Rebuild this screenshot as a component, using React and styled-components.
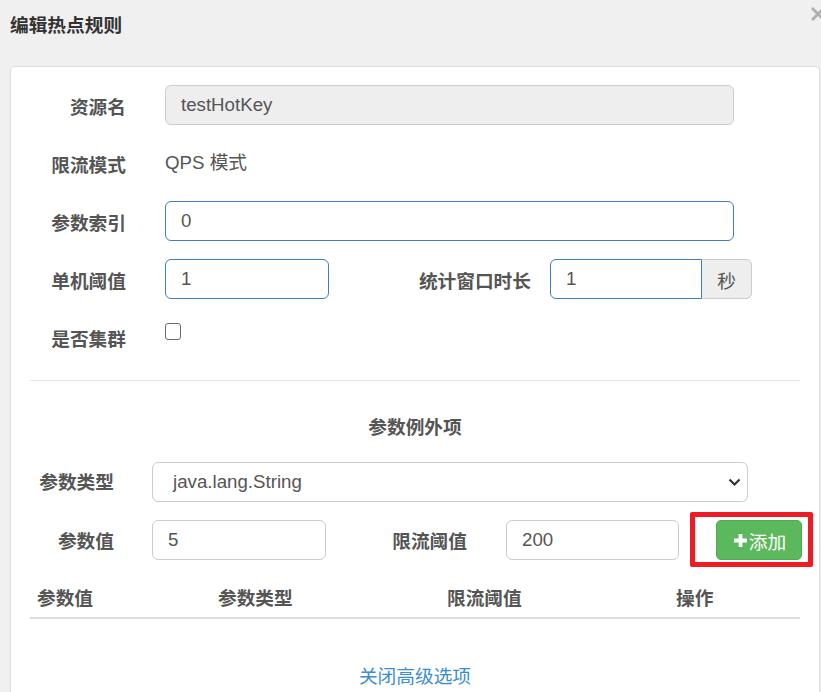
import React from "react";
import styled, { createGlobalStyle } from "styled-components";

const Global = createGlobalStyle`
  html, body { margin: 0; padding: 0; background: #f0f0f0; overflow: hidden; }
  body {
    font-family: "Liberation Sans", "Noto Sans CJK SC", sans-serif;
    font-size: 18.7px;
    color: #555;
  }
  * { box-sizing: border-box; }
`;

const Page = styled.div`
  width: 821px;
  height: 692px;
  overflow: hidden;
  background: #f0f0f0;
`;

const Header = styled.div`
  height: 52px;
  display: flex;
  align-items: center;
  justify-content: space-between;
  padding-left: 10px;
`;

const Title = styled.h4`
  margin: 0;
  font-size: 18.7px;
  line-height: 26px;
  font-weight: 700;
  color: #333;
`;

const CloseButton = styled.span`
  align-self: flex-start;
  display: block;
  margin-top: 7px;
  margin-right: -4px;
  line-height: 0;
`;

const Card = styled.div`
  margin: 14px 1px 0 10px;
  background: #fff;
  border: 1px solid #ddd;
  border-radius: 4px;
  padding: 18px 19px 60px;
`;

const Stack = styled.div`
  display: flex;
  flex-direction: column;
  gap: 18px;
  margin-top: ${(p) => p.$mt || 0}px;
`;

const Row = styled.div`
  display: flex;
  align-items: ${(p) => p.$align || "center"};
  min-height: 40px;
`;

const Label = styled.label`
  flex: none;
  width: ${(p) => p.$w}px;
  margin-right: ${(p) => p.$mr}px;
  padding-top: ${(p) => p.$pt || 0}px;
  text-align: right;
  font-weight: 700;
  color: #555;
  line-height: 26px;
  white-space: nowrap;
`;

const Static = styled.div`
  line-height: 26px;
  color: #555;
`;

const Input = styled.input`
  flex: none;
  width: ${(p) => p.$w || "100%"};
  height: 40px;
  padding: 0 15px;
  border: 1px solid ${(p) => (p.$focus ? "#3d7fc4" : "#ccc")};
  border-radius: ${(p) => p.$radius || "6px"};
  background: ${(p) => (p.disabled ? "#eee" : "#fff")};
  font: inherit;
  color: #555;
  outline: none;
`;

const InputGroup = styled.div`
  display: flex;
  width: 202px;
  flex: none;
`;

const Addon = styled.span`
  width: 50px;
  height: 40px;
  display: flex;
  align-items: center;
  justify-content: center;
  background: #eee;
  border: 1px solid #ccc;
  border-left: none;
  border-radius: 0 6px 6px 0;
  color: #555;
`;

const Checkbox = styled.span`
  display: block;
  width: 16px;
  height: 17px;
  margin-top: 6px;
  border: 1px solid #6b6b6b;
  border-radius: 3px;
  background: #fff;
`;

const Divider = styled.hr`
  margin: 23px 0 0;
  border: none;
  border-top: 1px solid #e8e8e8;
`;

const SectionTitle = styled.div`
  margin-top: 34px;
  text-align: center;
  font-weight: 700;
  color: #555;
  line-height: 26px;
`;

const Select = styled.div`
  flex: none;
  width: 596px;
  height: 40px;
  display: flex;
  align-items: center;
  justify-content: space-between;
  padding: 0 6px 0 20px;
  border: 1px solid #ccc;
  border-radius: 6px;
  color: #555;
`;

const Highlight = styled.div`
  flex: none;
  margin: -8px 0 -7px 11px;
  padding: 3px 6px 2px 21px;
  border: 5px solid #ed1c24;
  border-radius: 2px;
`;

const AddButton = styled.button`
  width: 86px;
  height: 40px;
  display: flex;
  align-items: center;
  justify-content: center;
  gap: 2px;
  padding: 0 0 0 2px;
  background: #5cb85c;
  border: 1px solid #4cae4c;
  border-radius: 5px;
  color: #fff;
  font: inherit;
`;

const Table = styled.table`
  width: 100%;
  margin-top: 21px;
  border-collapse: collapse;
`;

const Th = styled.th`
  width: ${(p) => (p.$w ? `${p.$w}px` : "auto")};
  padding: 6px 8px 6px 7px;
  text-align: left;
  font-weight: 700;
  color: #555;
  line-height: 24px;
  border-bottom: 2px solid #ddd;
`;

const LinkRow = styled.div`
  margin-top: 45px;
  text-align: center;
  line-height: 26px;
`;

const Link = styled.a`
  color: #3c8dcc;
  text-decoration: none;
`;

const Chevron = () => (
  <svg width="13" height="9" viewBox="0 0 13 9">
    <polyline points="1.5,1.5 6.5,6.5 11.5,1.5" fill="none" stroke="#333" strokeWidth="2.2" />
  </svg>
);

const Plus = () => (
  <svg width="13" height="13" viewBox="0 0 13 13">
    <path d="M4.6 0h3.8v4.6H13v3.8H8.4V13H4.6V8.4H0V4.6h4.6z" fill="#fff" />
  </svg>
);

const CloseIcon = () => (
  <svg width="14" height="14" viewBox="0 0 14 14">
    <path d="M2 2L12 12M12 2L2 12" stroke="#b0b0b0" strokeWidth="3" strokeLinecap="square" />
  </svg>
);

export default function App() {
  return (
    <Page>
      <Global />
      <Header>
        <Title>编辑热点规则</Title>
        <CloseButton aria-label="关闭">
          <CloseIcon />
        </CloseButton>
      </Header>
      <Card>
        <Stack>
          <Row>
            <Label $w={96} $mr={39} $pt={6}>资源名</Label>
            <Input $w="569px" disabled defaultValue="testHotKey" />
          </Row>
          <Row>
            <Label $w={96} $mr={39} $pt={6}>限流模式</Label>
            <Static>QPS 模式</Static>
          </Row>
          <Row>
            <Label $w={96} $mr={39} $pt={6}>参数索引</Label>
            <Input $w="569px" $focus defaultValue="0" />
          </Row>
          <Row>
            <Label $w={96} $mr={39} $pt={6}>单机阈值</Label>
            <Input $w="164px" $focus defaultValue="1" />
            <Label $w={202} $mr={19} $pt={6}>统计窗口时长</Label>
            <InputGroup>
              <Input $w="152px" $focus $radius="6px 0 0 6px" defaultValue="1" />
              <Addon>秒</Addon>
            </InputGroup>
          </Row>
          <Row $align="flex-start">
            <Label $w={96} $mr={39} $pt={10}>是否集群</Label>
            <Checkbox />
          </Row>
        </Stack>
        <Divider />
        <SectionTitle>参数例外项</SectionTitle>
        <Stack $mt={21}>
          <Row>
            <Label $w={84} $mr={38} $pt={2}>参数类型</Label>
            <Select>
              <span>java.lang.String</span>
              <Chevron />
            </Select>
          </Row>
          <Row>
            <Label $w={84} $mr={38} $pt={4}>参数值</Label>
            <Input $w="174px" defaultValue="5" />
            <Label $w={141} $mr={39} $pt={4}>限流阈值</Label>
            <Input $w="173px" defaultValue="200" />
            <Highlight>
              <AddButton>
                <Plus />
                <span>添加</span>
              </AddButton>
            </Highlight>
          </Row>
        </Stack>
        <Table>
          <thead>
            <tr>
              <Th $w={181}>参数值</Th>
              <Th $w={229}>参数类型</Th>
              <Th $w={229}>限流阈值</Th>
              <Th>操作</Th>
            </tr>
          </thead>
        </Table>
        <LinkRow>
          <Link href="#">关闭高级选项</Link>
        </LinkRow>
      </Card>
    </Page>
  );
}
